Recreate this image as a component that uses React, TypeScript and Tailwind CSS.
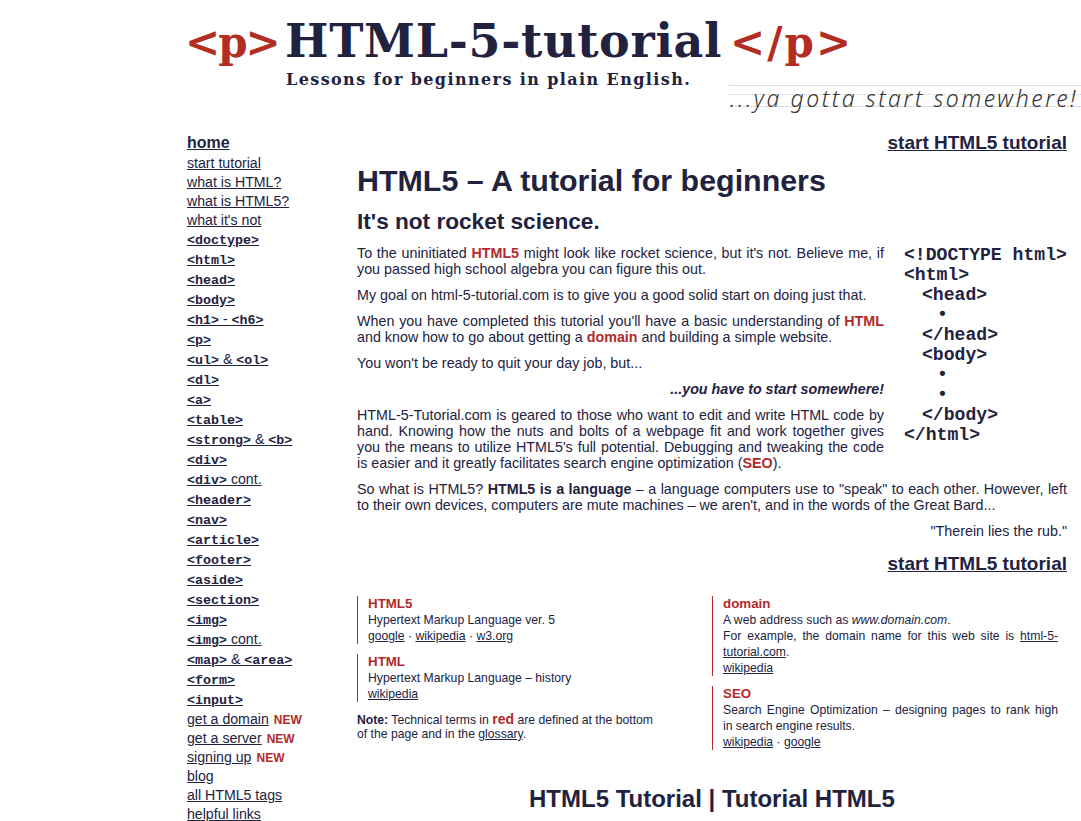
const ink = 'text-[#22223f]'

const plainTop = ['start tutorial', 'what is HTML?', 'what is HTML5?', "what it's not"]
const tagLinks = [
  ['<doctype>'],
  ['<html>'],
  ['<head>'],
  ['<body>'],
  ['<h1>', ' - ', '<h6>'],
  ['<p>'],
  ['<ul>', ' & ', '<ol>'],
  ['<dl>'],
  ['<a>'],
  ['<table>'],
  ['<strong>', ' & ', '<b>'],
  ['<div>'],
  ['<div>', ' cont.'],
  ['<header>'],
  ['<nav>'],
  ['<article>'],
  ['<footer>'],
  ['<aside>'],
  ['<section>'],
  ['<img>'],
  ['<img>', ' cont.'],
  ['<map>', ' & ', '<area>'],
  ['<form>'],
  ['<input>'],
]
const plainBottom = [
  { label: 'get a domain', isNew: true },
  { label: 'get a server', isNew: true },
  { label: 'signing up', isNew: true },
  { label: 'blog' },
  { label: 'all HTML5 tags' },
  { label: 'helpful links' },
]
const codeLines = [
  { text: '<!DOCTYPE html>', indent: '' },
  { text: '<html>', indent: '' },
  { text: '<head>', indent: 'pl-[18px]' },
  { text: '•', indent: 'pl-[33px]' },
  { text: '</head>', indent: 'pl-[18px]' },
  { text: '<body>', indent: 'pl-[18px]' },
  { text: '•', indent: 'pl-[33px]' },
  { text: '•', indent: 'pl-[33px]' },
  { text: '</body>', indent: 'pl-[18px]' },
  { text: '</html>', indent: '' },
]

const Red = ({ children }: { children: React.ReactNode }) => (
  <strong className="font-bold text-[#b22a2a]">{children}</strong>
)

const Sidebar = () => (
  <nav className="w-[170px] shrink-0 pt-[2px] text-[14.15px] text-[#22223f]">
    <a className="block h-[22px] text-[16px] font-bold leading-[21px] underline">home</a>
    {plainTop.map((label) => (
      <a key={label} className="block h-[19px] leading-[19px] underline">
        {label}
      </a>
    ))}
    <div className="mt-[-1px]">
      {tagLinks.map((parts, i) => (
        <a key={i} className="block h-[20px] leading-[20px] underline">
          {parts.map((part, j) =>
            part.startsWith('<') ? (
              <span key={j} className="font-['Liberation_Mono',monospace] text-[13.33px] font-bold">
                {part}
              </span>
            ) : (
              <span key={j}>{part}</span>
            ),
          )}
        </a>
      ))}
    </div>
    <div className="mt-px">
      {plainBottom.map((item) => (
        <div key={item.label} className="h-[19px] leading-[19px]">
          <a className="underline">{item.label}</a>
          {item.isNew && <span className="ml-[5px] text-[12px] font-bold text-[#b22a2a]">NEW</span>}
        </div>
      ))}
    </div>
  </nav>
)

const Glossary = ({
  title,
  links,
  children,
}: {
  title: string
  links: string[]
  children: React.ReactNode
}) => (
  <div className="border-l border-[#b22a2a] pl-[10px] text-[12.2px] leading-[16px]">
    <div className="text-[13.33px] font-bold leading-[16px] text-[#b22a2a]">{title}</div>
    {children}
    <div>
      {links.map((link, i) => (
        <span key={link}>
          {i > 0 && ' · '}
          <a className="underline">{link}</a>
        </span>
      ))}
    </div>
  </div>
)

const App = () => (
  <div className={`h-[821px] overflow-hidden bg-white font-['Liberation_Sans',Arial,sans-serif] ${ink}`}>
    <header className="relative h-[130px] pl-[187px]">
      <div className="flex h-[71px] items-baseline whitespace-nowrap pt-[11px] font-['DejaVu_Serif',serif] text-[42px] font-bold leading-[60px]">
        <span className="ml-[-2px] w-[100px] tracking-[-2px] text-[#b22d22]">{'<p>'}</span>
        <span className="w-[445px] text-[46px] tracking-[0.7px] text-[#22223f]">HTML-5-tutorial</span>
        <span className="tracking-[2px] text-[#b22d22]">{'</p>'}</span>
      </div>
      <p className="ml-[99px] mt-[-1px] font-['DejaVu_Serif',serif] text-[16px] font-bold leading-[20px] tracking-[1.4px]">
        Lessons for beginners in plain English.
      </p>
      {/* tagline sits on ruled paper lines, hanging off the right of the logo */}
      <div className="absolute left-[729px] top-[85px] h-[22px] w-[352px] border-y border-[#dcdce0]">
        <div className="mt-[8px] border-t border-dotted border-[#d0d0d4]" />
        <span className="absolute left-[1px] top-[-3px] whitespace-nowrap font-['Noto_Sans',sans-serif] text-[23px] font-light italic leading-[30px] tracking-[2.58px] text-[#333]">
          ...ya gotta start somewhere!
        </span>
      </div>
    </header>

    <div className="flex pl-[187px]">
      <Sidebar />
      <main className="w-[710px] pt-px text-[14.3px] leading-[16px]">
        <div className="text-right text-[19px] font-bold leading-[24px]">
          <a className="underline">start HTML5 tutorial</a>
        </div>
        <h1 className="mt-[7px] text-[30.4px] font-bold leading-[37px]">HTML5 – A tutorial for beginners</h1>
        <h2 className="mt-[9px] text-[22.6px] font-bold leading-[28px]">It's not rocket science.</h2>

        <div className="float-right ml-[20px] mt-[9px] w-[163px] whitespace-pre font-['Liberation_Mono',monospace] text-[18.1px] font-bold leading-[20px]">
          {codeLines.map((line, i) => (
            <div key={i} className={line.indent}>
              {line.text}
            </div>
          ))}
        </div>

        <div className="mt-[9px] w-[527px] text-justify">
          <p>
            To the uninitiated <Red>HTML5</Red> might look like rocket science, but it's not. Believe me, if you passed
            high school algebra you can figure this out.
          </p>
          <p className="mt-[10px]">My goal on html-5-tutorial.com is to give you a good solid start on doing just that.</p>
          <p className="mt-[10px]">
            When you have completed this tutorial you'll have a basic understanding of <Red>HTML</Red> and know how to go
            about getting a <Red>domain</Red> and building a simple website.
          </p>
          <p className="mt-[10px]">You won't be ready to quit your day job, but...</p>
          <p className="mt-[10px] text-right font-bold italic">...you have to start somewhere!</p>
          <p className="mt-[10px]">
            HTML-5-Tutorial.com is geared to those who want to edit and write HTML code by hand. Knowing how the nuts and
            bolts of a webpage fit and work together gives you the means to utilize HTML5's full potential. Debugging and
            tweaking the code is easier and it greatly facilitates search engine optimization (<Red>SEO</Red>).
          </p>
        </div>
        <p className="mt-[10px] text-justify">
          So what is HTML5? <strong>HTML5 is a language</strong> – a language computers use to "speak" to each other.
          However, left to their own devices, computers are mute machines – we aren't, and in the words of the Great
          Bard...
        </p>
        <p className="mt-[10px] text-right">"Therein lies the rub."</p>
        <div className="mt-[13px] text-right text-[19px] font-bold leading-[24px]">
          <a className="underline">start HTML5 tutorial</a>
        </div>

        <div className="mt-[20px] grid grid-cols-[300px_346px] gap-x-[55px]">
          <div className="flex flex-col gap-[10px]">
            <Glossary title="HTML5" links={['google', 'wikipedia', 'w3.org']}>
              <div>Hypertext Markup Language ver. 5</div>
            </Glossary>
            <Glossary title="HTML" links={['wikipedia']}>
              <div>Hypertext Markup Language – history</div>
            </Glossary>
            <p className="text-[12.2px] leading-[14px]">
              <strong>Note:</strong> Technical terms in <span className="text-[14px] font-bold text-[#b22a2a]">red</span> are
              defined at the bottom of the page and in the <a className="underline">glossary</a>.
            </p>
          </div>
          <div className="flex flex-col gap-[10px]">
            <Glossary title="domain" links={['wikipedia']}>
              <div>
                A web address such as <em>www.domain.com</em>.
              </div>
              <div className="text-justify">
                For example, the domain name for this web site is <a className="underline">html-5-tutorial.com</a>.
              </div>
            </Glossary>
            <Glossary title="SEO" links={['wikipedia', 'google']}>
              <div className="[text-align-last:justify]">Search Engine Optimization – designing pages to rank high</div>
              <div>in search engine results.</div>
            </Glossary>
          </div>
        </div>

        <h3 className="mt-[35px] pl-[172px] text-[24px] font-bold leading-[28px]">HTML5 Tutorial | Tutorial HTML5</h3>
      </main>
    </div>
  </div>
)

export default App
